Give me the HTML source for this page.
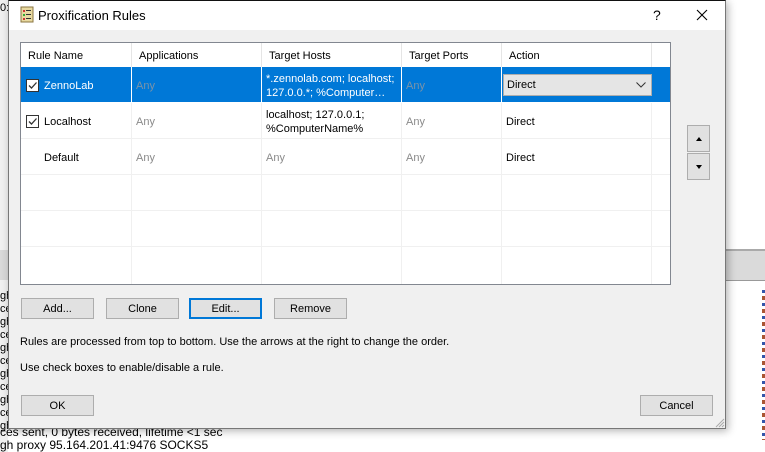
<!DOCTYPE html>
<html><head><meta charset="utf-8"><style>
*{box-sizing:border-box;margin:0;padding:0}
body{width:765px;height:452px;overflow:hidden;background:#fff;font-family:"Liberation Sans",sans-serif;font-size:11px;color:#000;position:relative}
.a{position:absolute}
.btn{position:absolute;height:21px;background:#e1e1e1;border:1px solid #adadad;text-align:center;line-height:20px;font-size:11px}
.row{position:absolute;left:21px;width:649px;height:36px;border-bottom:1px solid #f0f0f0}
.cell{position:absolute;top:0;height:35px;border-right:1px solid #f0f0f0;padding:2px 4px 0;display:flex;align-items:center;line-height:14px}
.g{color:#8a8a8a}
.cb{position:absolute;left:6px;top:11px;width:13px;height:13px;border:1px solid #333;background:#fff}
</style></head><body>
<div class="a" style="left:0;top:0;width:8px;height:452px;background:#f0f0f0"></div>
<div class="a" style="left:0;top:250px;width:8px;height:30px;background:#d9d9d9"></div>
<div class="a" style="left:0;top:2px;font-size:11px">0:2</div>
<div class="a" style="left:0;top:290px;width:8px;line-height:13px;font-size:11px;overflow:hidden">gh<br>ce<br>gh<br>ce<br>gh<br>ce<br>gh<br>ce<br>gh<br>ce<br>gh</div>
<div class="a" style="left:0;top:426px;font-size:12px;line-height:13px;white-space:nowrap">ces sent, 0 bytes received, lifetime &lt;1 sec<br>gh proxy 95.164.201.41:9476 SOCKS5</div>
<div class="a" style="left:726px;top:249px;width:39px;height:32px;background:#dadada;border-top:2px solid #aaa;border-bottom:1px solid #999"></div>
<div class="a" style="left:762px;top:290px;width:3px;height:150px;background:repeating-linear-gradient(#35a 0 3px,#fff 3px 6px,#a53 6px 10px,#fff 10px 13px)"></div>
<div class="a" style="left:8px;top:0;width:718px;height:429px;background:#f0f0f0;border:1px solid #777;border-top:1px solid #111;box-shadow:2px 2px 8px rgba(0,0,0,.3)">
 <div class="a" style="left:0;top:0;width:716px;height:29px;background:#fff"></div>
 <svg class="a" style="left:10px;top:5px" width="16" height="18" viewBox="0 0 16 18"><rect x="2" y="1" width="12" height="15" fill="#e8d9a0" stroke="#8a7540"/><rect x="4" y="4" width="2" height="2" fill="#c33"/><rect x="4" y="8" width="2" height="2" fill="#3a3"/><rect x="4" y="12" width="2" height="2" fill="#c33"/><rect x="7" y="4" width="5" height="1" fill="#333"/><rect x="7" y="8" width="5" height="1" fill="#333"/><rect x="7" y="12" width="5" height="1" fill="#333"/></svg>
 <div class="a" style="left:29px;top:7px;font-size:13px">Proxification Rules</div>
 <div class="a" style="left:644px;top:6px;font-size:14px">?</div>
 <svg class="a" style="left:687px;top:8px" width="12" height="12"><path d="M1 1L11 11M11 1L1 11" stroke="#000" stroke-width="1.1"/></svg>
</div>
<div class="a" style="left:20px;top:42px;width:651px;height:243px;background:#fff;border:1px solid #828790"></div>
<div class="a" style="left:21px;top:43px;width:649px;height:24px">
 <div class="cell" style="left:0;width:111px;height:24px;border-right:1px solid #e5e5e5">&nbsp;Rule Name</div>
 <div class="cell" style="left:111px;width:130px;height:24px;border-right:1px solid #e5e5e5">&nbsp;Applications</div>
 <div class="cell" style="left:241px;width:140px;height:24px;border-right:1px solid #e5e5e5">&nbsp;Target Hosts</div>
 <div class="cell" style="left:381px;width:100px;height:24px;border-right:1px solid #e5e5e5">&nbsp;Target Ports</div>
 <div class="cell" style="left:481px;width:150px;height:24px;border-right:1px solid #e5e5e5">&nbsp;Action</div>
</div>
<div class="row" style="top:67px;background:#0078d7;color:#fff;border-bottom:1px solid #fff">
 <div class="cb" style="left:5px;top:12px"><svg width="11" height="11" class="a"><path d="M2 5.5L4.5 8L9.5 2.5" stroke="#333" fill="none" stroke-width="1.3"/></svg></div>
 <div class="cell" style="left:0;width:111px;padding-left:23px;border-color:#fff">ZennoLab</div>
 <div class="cell g" style="left:111px;width:130px;border-color:#fff;color:#7a93a8">Any</div>
 <div class="cell" style="left:241px;width:140px;border-color:#fff">*.zennolab.com; localhost; 127.0.0.*; %Computer…</div>
 <div class="cell" style="left:381px;width:100px;border-color:#fff;color:#7a93a8">Any</div>
 <div class="a" style="left:482px;top:7px;width:149px;height:22px;background:#e5e5e5;border:1px solid #adadad;color:#000;line-height:21px;padding-left:3px">Direct<svg class="a" style="right:5px;top:7px" width="10" height="6"><path d="M0.5 0.5L5 5L9.5 0.5" stroke="#333" fill="none"/></svg></div>
</div>
<div class="row" style="top:103px">
 <div class="cb" style="left:5px;top:12px"><svg width="11" height="11" class="a"><path d="M2 5.5L4.5 8L9.5 2.5" stroke="#333" fill="none" stroke-width="1.3"/></svg></div>
 <div class="cell" style="left:0;width:111px;padding-left:23px">Localhost</div>
 <div class="cell g" style="left:111px;width:130px">Any</div>
 <div class="cell" style="left:241px;width:140px">localhost; 127.0.0.1; %ComputerName%</div>
 <div class="cell g" style="left:381px;width:100px">Any</div>
 <div class="cell" style="left:481px;width:150px">Direct</div>
</div>
<div class="row" style="top:139px">
 <div class="cell" style="left:0;width:111px;padding-left:23px">Default</div>
 <div class="cell g" style="left:111px;width:130px">Any</div>
 <div class="cell g" style="left:241px;width:140px">Any</div>
 <div class="cell g" style="left:381px;width:100px">Any</div>
 <div class="cell" style="left:481px;width:150px">Direct</div>
</div>
<div class="row" style="top:175px"><div class="cell" style="left:0;width:111px"></div><div class="cell" style="left:111px;width:130px"></div><div class="cell" style="left:241px;width:140px"></div><div class="cell" style="left:381px;width:100px"></div><div class="cell" style="left:481px;width:150px"></div></div>
<div class="row" style="top:211px"><div class="cell" style="left:0;width:111px"></div><div class="cell" style="left:111px;width:130px"></div><div class="cell" style="left:241px;width:140px"></div><div class="cell" style="left:381px;width:100px"></div><div class="cell" style="left:481px;width:150px"></div></div>
<div class="row" style="top:247px;height:37px;border:none"><div class="cell" style="left:0;width:111px;height:37px"></div><div class="cell" style="left:111px;width:130px;height:37px"></div><div class="cell" style="left:241px;width:140px;height:37px"></div><div class="cell" style="left:381px;width:100px;height:37px"></div><div class="cell" style="left:481px;width:150px;height:37px"></div></div>
<div class="btn" style="left:687px;top:125px;width:23px;height:27px"><svg class="a" style="left:8px;top:11px" width="6" height="4"><path d="M0 4L3 0L6 4Z" fill="#000"/></svg></div>
<div class="btn" style="left:687px;top:153px;width:23px;height:27px"><svg class="a" style="left:8px;top:11px" width="6" height="4"><path d="M0 0L3 4L6 0Z" fill="#000"/></svg></div>
<div class="btn" style="left:21px;top:298px;width:73px">Add...</div>
<div class="btn" style="left:106px;top:298px;width:73px">Clone</div>
<div class="btn" style="left:189px;top:298px;width:73px;border:2px solid #0078d7;line-height:18px">Edit...</div>
<div class="btn" style="left:274px;top:298px;width:73px">Remove</div>
<div class="a" style="left:20px;top:336px">Rules are processed from top to bottom. Use the arrows at the right to change the order.</div>
<div class="a" style="left:20px;top:362px">Use check boxes to enable/disable a rule.</div>
<div class="btn" style="left:21px;top:395px;width:73px">OK</div>
<div class="btn" style="left:640px;top:395px;width:73px">Cancel</div>
<svg class="a" style="left:713px;top:416px" width="12" height="12"><path d="M11 3L3 11M11 6L6 11M11 9L9 11" stroke="#aaa"/></svg>
</body></html>
